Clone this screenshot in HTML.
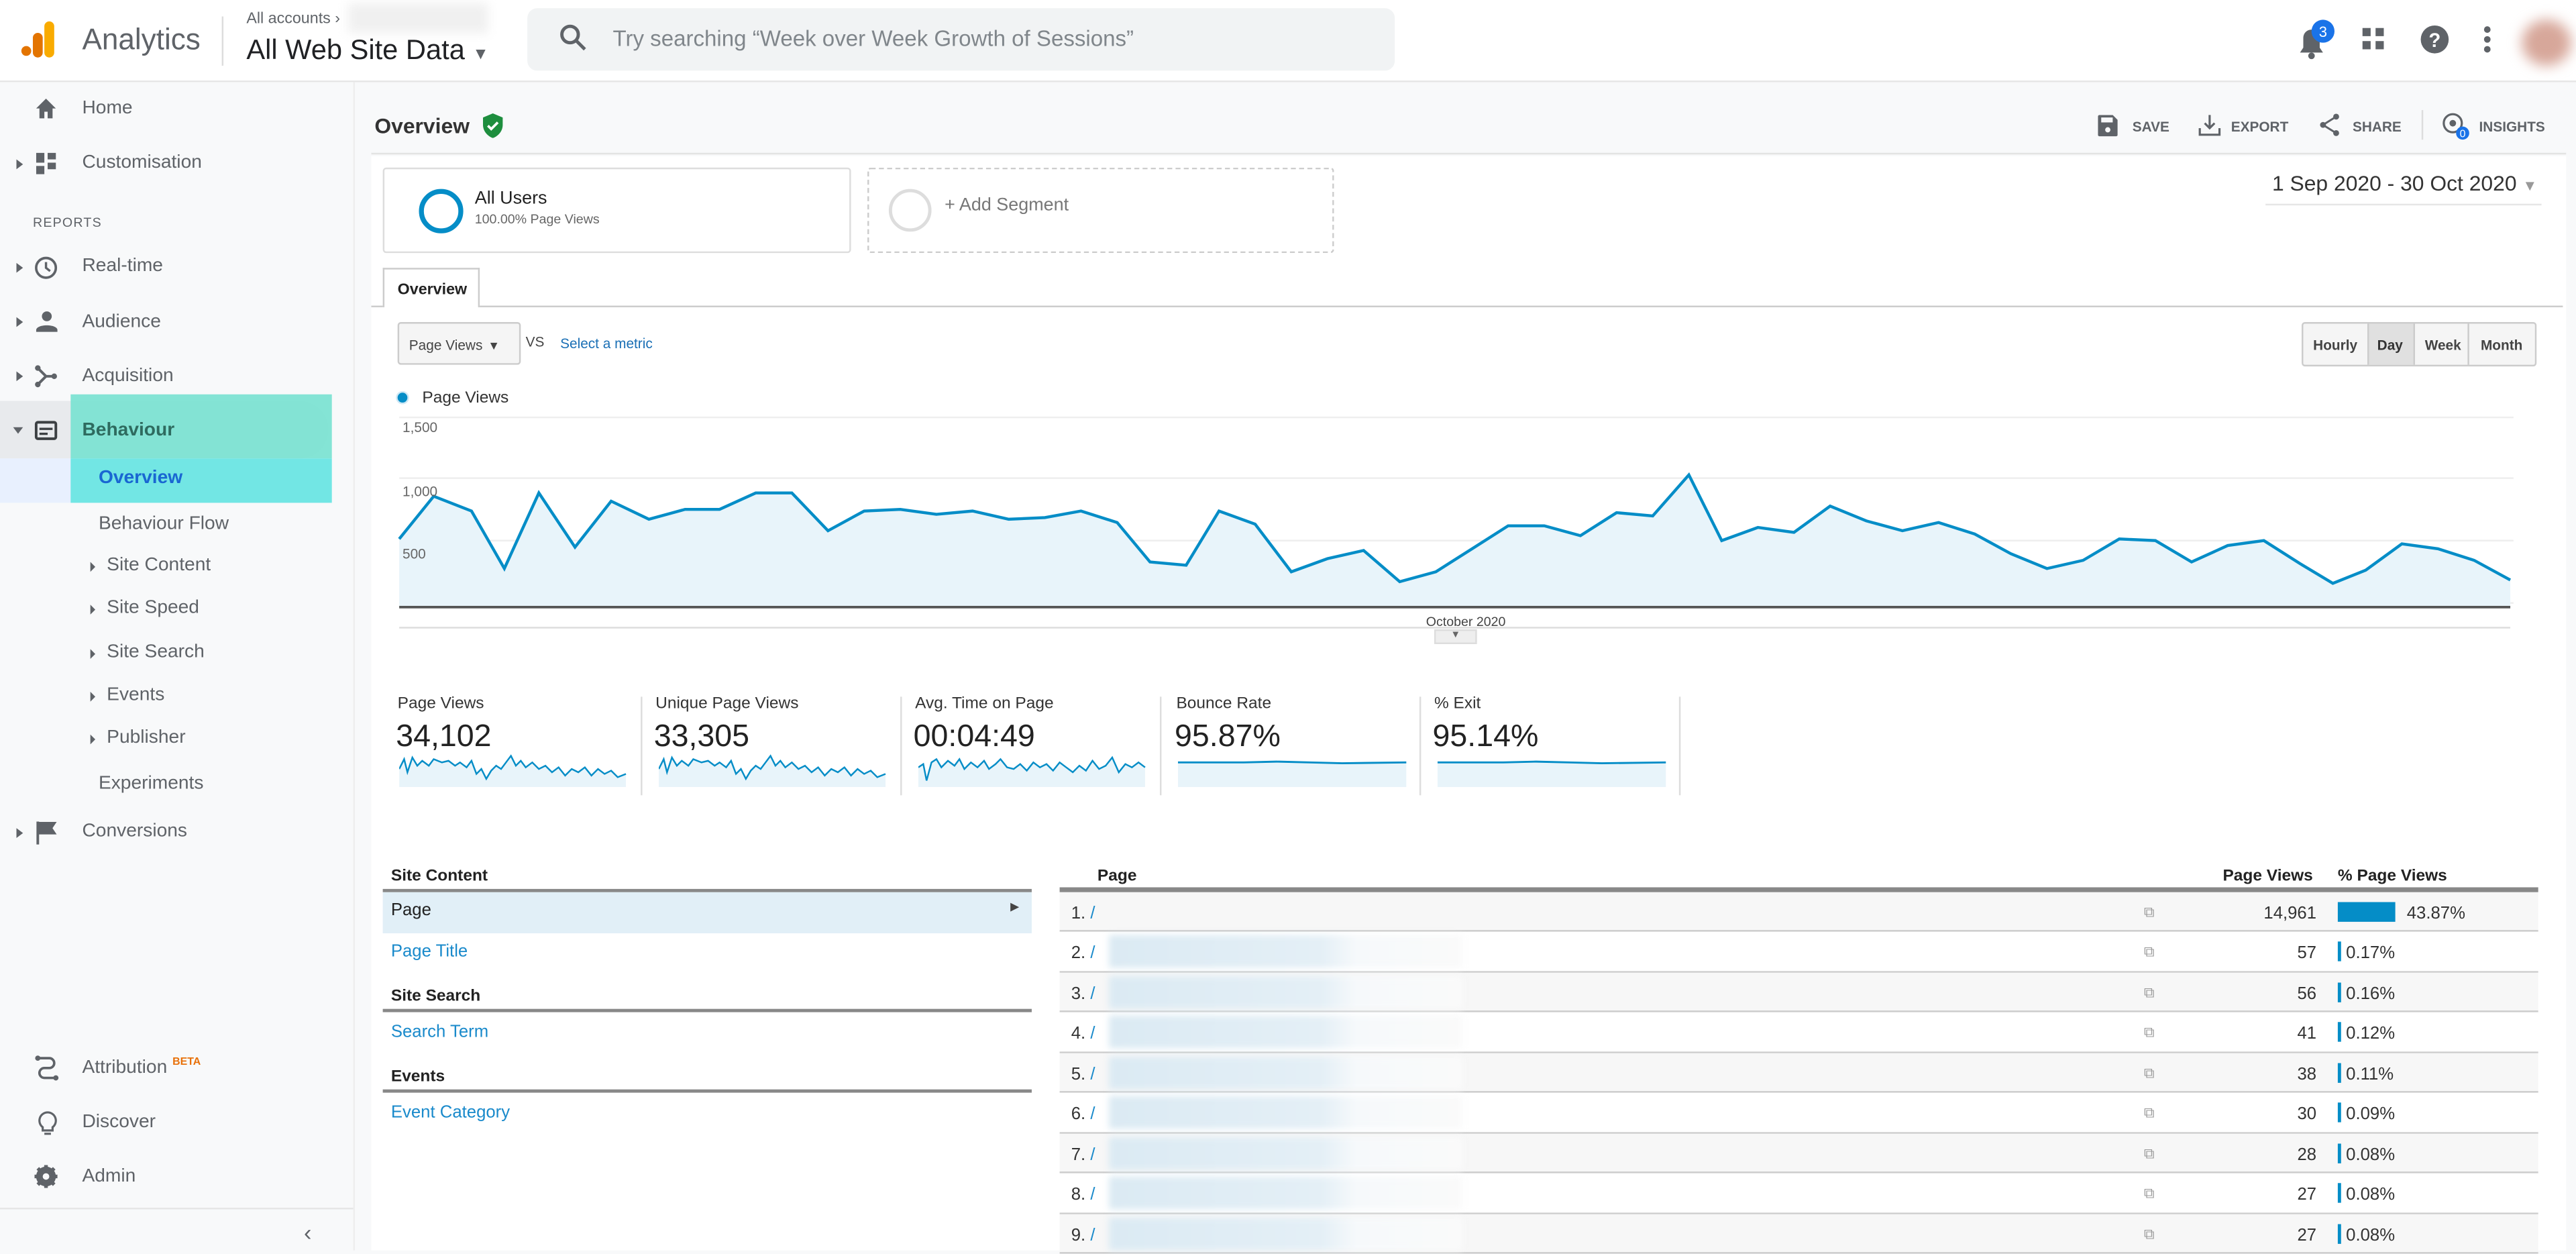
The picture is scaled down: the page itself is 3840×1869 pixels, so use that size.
<!DOCTYPE html>
<html><head><meta charset="utf-8"><style>
*{box-sizing:border-box;margin:0;padding:0}
html,body{width:3840px;height:1864px;overflow:hidden;background:#f8f9fa;font-family:"Liberation Sans",sans-serif}
#s{position:absolute;left:0;top:0;width:1568px;height:761px;transform:scale(2.44898);transform-origin:0 0;background:#f8f9fa}
.a{position:absolute;white-space:nowrap}
.nav{font-size:11.5px;color:#5f6368}
.ic{fill:#5f6368}
.tri{position:absolute;width:0;height:0;border-top:3px solid transparent;border-bottom:3px solid transparent;border-left:4px solid #5f6368}
.row{position:absolute;left:645px;width:900px;height:24.5px;border-bottom:1px solid #ccc;font-size:10.5px;color:#333}
.row span{position:absolute;top:7px}
.blur{position:absolute;left:675px;width:215px;height:20px;background:linear-gradient(90deg,#dbeaf3 0,#e4eff6 60%,#f6f9fb 70%,#fafafa 100%);filter:blur(2px)}
</style></head><body><div id="s">
<!-- top bar -->
<div class="a" style="left:0;top:0;width:1568px;height:50px;background:#fff;border-bottom:1px solid #e6e6e6"></div>
<svg class="a" style="left:12px;top:11px" width="24" height="26"><rect x="1" y="17" width="6" height="6" rx="3" fill="#e37400"/><rect x="8" y="9" width="6" height="15" rx="3" fill="#e37400"/><rect x="15" y="2" width="6" height="22" rx="3" fill="#f9ab00"/></svg>
<div class="a" style="left:50px;top:14px;font-size:18px;color:#5f6368">Analytics</div>
<div class="a" style="left:135px;top:10px;width:1px;height:30px;background:#ddd"></div>
<div class="a" style="left:150px;top:6px;font-size:9.5px;color:#5f6368">All accounts ›</div>
<div class="a" style="left:212px;top:2px;width:85px;height:18px;background:#f0f0f0;filter:blur(3px)"></div>
<div class="a" style="left:150px;top:21px;font-size:17px;color:#202124">All Web Site Data <span style="font-size:10px;color:#5f6368">▼</span></div>
<div class="a" style="left:321px;top:5px;width:528px;height:38px;background:#f1f3f4;border-radius:6px"></div>
<svg class="a" style="left:340px;top:14px" width="18" height="18"><circle cx="7" cy="7" r="5" fill="none" stroke="#5f6368" stroke-width="2"/><path d="M11 11l5 5" stroke="#5f6368" stroke-width="2"/></svg>
<div class="a" style="left:373px;top:16px;font-size:13.5px;color:#80868b">Try searching “Week over Week Growth of Sessions”</div>
<svg class="a" style="left:1396px;top:10px" width="30" height="28"><path d="M4 22h14l-2-3v-6a5 5 0 0 0-10 0v6z" class="ic"/><circle cx="11" cy="24" r="2" class="ic"/><circle cx="18" cy="9" r="7" fill="#1a73e8"/><text x="18" y="12.5" font-size="9" fill="#fff" text-anchor="middle" font-family="Liberation Sans">3</text></svg>
<svg class="a" style="left:1438px;top:17px" width="14" height="14"><rect x="0" y="0" width="5" height="5" class="ic"/><rect x="8" y="0" width="5" height="5" class="ic"/><rect x="0" y="8" width="5" height="5" class="ic"/><rect x="8" y="8" width="5" height="5" class="ic"/></svg>
<svg class="a" style="left:1473px;top:15px" width="18" height="18"><circle cx="9" cy="9" r="8.5" class="ic"/><text x="9" y="13.5" font-size="12" font-weight="bold" fill="#fff" text-anchor="middle" font-family="Liberation Sans">?</text></svg>
<svg class="a" style="left:1511px;top:15px" width="6" height="18"><circle cx="3" cy="3" r="2" class="ic"/><circle cx="3" cy="9" r="2" class="ic"/><circle cx="3" cy="15" r="2" class="ic"/></svg>
<div class="a" style="left:1535px;top:12px;width:30px;height:28px;border-radius:50%;background:#d7a79a;filter:blur(4px)"></div>
<!-- sidebar -->
<div class="a" style="left:0;top:50px;width:216px;height:711px;background:#f8f9fa;border-right:1px solid #eee"></div>
<svg class="a" style="left:21px;top:59px" width="14" height="14"><path d="M7 1l6 6h-2v6H8V9H6v4H3V7H1z" class="ic"/></svg>
<div class="a nav" style="left:50px;top:60px">Home</div>
<div class="tri" style="left:10px;top:97px"></div>
<svg class="a" style="left:22px;top:93px" width="13" height="14"><rect x="0" y="0" width="5" height="6" class="ic"/><rect x="7" y="0" width="5" height="4" class="ic"/><rect x="0" y="8" width="5" height="5" class="ic"/><rect x="7" y="6" width="5" height="4" class="ic"/></svg>
<div class="a nav" style="left:50px;top:93px">Customisation</div>
<div class="a" style="left:20px;top:131px;font-size:8px;color:#5f6368;letter-spacing:.5px">REPORTS</div>
<div class="tri" style="left:10px;top:160px"></div>
<svg class="a" style="left:21px;top:156px" width="14" height="14"><circle cx="7" cy="7" r="6" fill="none" stroke="#5f6368" stroke-width="1.5"/><path d="M7 3.5V7l2.5 2" stroke="#5f6368" stroke-width="1.4" fill="none"/></svg>
<div class="a nav" style="left:50px;top:156px">Real-time</div>
<div class="tri" style="left:10px;top:193px"></div>
<svg class="a" style="left:22px;top:189px" width="13" height="13"><circle cx="6.5" cy="3.5" r="3" class="ic"/><path d="M0 12c0-4 13-4 13 0v1H0z" class="ic"/></svg>
<div class="a nav" style="left:50px;top:190px">Audience</div>
<div class="tri" style="left:10px;top:226px"></div>
<svg class="a" style="left:21px;top:222px" width="14" height="14"><path d="M2 2l5 5h5M7 7l-5 5" stroke="#5f6368" stroke-width="1.6" fill="none"/><circle cx="2" cy="2" r="1.7" class="ic"/><circle cx="12" cy="7" r="1.7" class="ic"/><circle cx="2" cy="12" r="1.7" class="ic"/></svg>
<div class="a nav" style="left:50px;top:223px">Acquisition</div>
<div class="a" style="left:0;top:244px;width:200px;height:35px;background:#e8eaed;border-radius:0 18px 18px 0"></div>
<div class="a" style="left:0;top:279px;width:200px;height:27px;background:#e8f0fe"></div>
<div class="a" style="left:43px;top:240px;width:159px;height:39px;background:#7de3d3;opacity:.95"></div>
<div class="a" style="left:43px;top:279px;width:159px;height:27px;background:#72e6e4"></div>
<div class="a" style="left:8px;top:260px;border-left:3px solid transparent;border-right:3px solid transparent;border-top:4px solid #5f6368"></div>
<svg class="a" style="left:21px;top:256px" width="14" height="12"><rect x="1" y="1" width="12" height="10" rx="1" fill="none" stroke="#3c4043" stroke-width="1.6"/><path d="M3 5h8M3 8h5" stroke="#3c4043" stroke-width="1.4"/></svg>
<div class="a nav" style="left:50px;top:256px;color:#2e6b5f;font-weight:bold">Behaviour</div>
<div class="a nav" style="left:60px;top:285px;color:#1967d2;font-weight:bold">Overview</div>
<div class="a nav" style="left:60px;top:313px">Behaviour Flow</div>
<div class="tri" style="left:55px;top:342px;border-left-width:3px"></div><div class="a nav" style="left:65px;top:338px">Site Content</div>
<div class="tri" style="left:55px;top:368px;border-left-width:3px"></div><div class="a nav" style="left:65px;top:364px">Site Speed</div>
<div class="tri" style="left:55px;top:395px;border-left-width:3px"></div><div class="a nav" style="left:65px;top:391px">Site Search</div>
<div class="tri" style="left:55px;top:421px;border-left-width:3px"></div><div class="a nav" style="left:65px;top:417px">Events</div>
<div class="tri" style="left:55px;top:447px;border-left-width:3px"></div><div class="a nav" style="left:65px;top:443px">Publisher</div>
<div class="a nav" style="left:60px;top:471px">Experiments</div>
<div class="tri" style="left:10px;top:504px"></div>
<svg class="a" style="left:22px;top:500px" width="13" height="14"><path d="M1 0v14M1 1h10l-2 3 2 3H1" stroke="#5f6368" stroke-width="1.6" fill="#5f6368"/></svg>
<div class="a nav" style="left:50px;top:500px">Conversions</div>
<svg class="a" style="left:21px;top:642px" width="16" height="16"><path d="M2 2h7a3 3 0 0 1 0 6H6a3 3 0 0 0 0 6h6" stroke="#5f6368" stroke-width="1.5" fill="none"/><circle cx="2" cy="2" r="1.6" class="ic"/><circle cx="13" cy="14" r="1.6" class="ic"/></svg>
<div class="a nav" style="left:50px;top:643px">Attribution <sup style="color:#e8710a;font-size:6.5px;font-weight:bold">BETA</sup></div>
<svg class="a" style="left:23px;top:676px" width="12" height="16"><path d="M6 1a5 5 0 0 0-3 9v2h6v-2a5 5 0 0 0-3-9z" fill="none" stroke="#5f6368" stroke-width="1.3"/><path d="M4 14h4" stroke="#5f6368" stroke-width="1.3"/></svg>
<div class="a nav" style="left:50px;top:677px">Discover</div>
<svg class="a" style="left:21px;top:709px" width="14" height="14"><circle cx="7" cy="7" r="4.5" fill="none" stroke="#5f6368" stroke-width="3"/><path d="M7 0v14M0 7h14M2 2l10 10M12 2L2 12" stroke="#5f6368" stroke-width="2.2"/><circle cx="7" cy="7" r="2" fill="#f8f9fa"/></svg>
<div class="a nav" style="left:50px;top:710px">Admin</div>
<div class="a" style="left:0;top:735px;width:215px;height:1px;background:#e6e6e6"></div>
<div class="a" style="left:185px;top:742px;font-size:14px;color:#5f6368">‹</div>
<!-- header -->
<div class="a" style="left:228px;top:69px;font-size:13px;font-weight:bold;color:#333">Overview</div>
<svg class="a" style="left:293px;top:69px" width="14" height="15"><path d="M7 0l6 2.5v4.5c0 4-3 7-6 8-3-1-6-4-6-8V2.5z" fill="#1e8e3e"/><path d="M4 7.5l2 2 4-4" stroke="#fff" stroke-width="1.5" fill="none"/></svg>
<div class="a" style="left:226px;top:93px;width:1336px;height:1px;background:#e3e3e3"></div>
<svg class="a" style="left:1277px;top:70px" width="12" height="13"><path d="M0 1a1 1 0 0 1 1-1h8l3 3v9a1 1 0 0 1-1 1H1a1 1 0 0 1-1-1z" class="ic"/><rect x="2" y="1.5" width="7" height="3" fill="#f8f9fa"/><circle cx="6" cy="9" r="1.6" fill="#f8f9fa"/></svg>
<div class="a" style="left:1298px;top:72px;font-size:8.5px;font-weight:bold;color:#5f6368">SAVE</div>
<svg class="a" style="left:1338px;top:69px" width="14" height="14"><path d="M7 1v8M4 6l3 3 3-3M1 9v4h12V9" stroke="#5f6368" stroke-width="1.3" fill="none"/></svg>
<div class="a" style="left:1358px;top:72px;font-size:8.5px;font-weight:bold;color:#5f6368">EXPORT</div>
<svg class="a" style="left:1411px;top:69px" width="14" height="14"><path d="M11 2L3 7l8 5" stroke="#5f6368" stroke-width="1.2" fill="none"/><circle cx="11" cy="2" r="1.8" class="ic"/><circle cx="3" cy="7" r="1.8" class="ic"/><circle cx="11" cy="12" r="1.8" class="ic"/></svg>
<div class="a" style="left:1432px;top:72px;font-size:8.5px;font-weight:bold;color:#5f6368">SHARE</div>
<div class="a" style="left:1474px;top:67px;width:1px;height:18px;background:#ddd"></div>
<svg class="a" style="left:1486px;top:68px" width="20" height="18"><circle cx="7" cy="7" r="5.5" fill="none" stroke="#5f6368" stroke-width="1.3"/><circle cx="7" cy="7" r="2" class="ic"/><circle cx="13" cy="13" r="4" fill="#1a73e8"/><text x="13" y="15.5" font-size="6.5" fill="#fff" text-anchor="middle" font-family="Liberation Sans">0</text></svg>
<div class="a" style="left:1509px;top:72px;font-size:8.5px;font-weight:bold;color:#5f6368">INSIGHTS</div>
<!-- white panel -->
<div class="a" style="left:226px;top:95px;width:1336px;height:666px;background:#fff"></div>
<div class="a" style="left:233px;top:102px;width:285px;height:52px;border:1px solid #ddd;border-radius:2px;background:#fff"></div>
<div class="a" style="left:255px;top:115px;width:27px;height:27px;border-radius:50%;border:3.5px solid #058dc7"></div>
<div class="a" style="left:289px;top:115px;font-size:11px;color:#222">All Users</div>
<div class="a" style="left:289px;top:129px;font-size:8px;color:#666">100.00% Page Views</div>
<div class="a" style="left:528px;top:102px;width:284px;height:52px;border:1px dashed #ccc;border-radius:2px"></div>
<div class="a" style="left:541px;top:115px;width:26px;height:26px;border-radius:50%;border:2px solid #ddd"></div>
<div class="a" style="left:575px;top:119px;font-size:11px;color:#777">+ Add Segment</div>
<div class="a" style="left:1383px;top:104px;font-size:13px;color:#333">1 Sep 2020 - 30 Oct 2020 <span style="font-size:9px;color:#999">▼</span></div>
<div class="a" style="left:1379px;top:124px;width:168px;height:1px;background:#e6e6e6"></div>
<div class="a" style="left:226px;top:186px;width:1334px;height:1px;background:#ccc"></div>
<div class="a" style="left:233px;top:163px;width:59px;height:24px;background:#fff;border:1px solid #ccc;border-bottom:none;font-size:9.5px;font-weight:bold;color:#222;padding:7px 0 0 8px">Overview</div>
<div class="a" style="left:242px;top:196px;width:75px;height:26px;border:1px solid #ccc;border-radius:2px;background:#f5f5f5;font-size:8.5px;color:#444;padding:8px 0 0 6px">Page Views &nbsp;▾</div>
<div class="a" style="left:320px;top:203px;font-size:8.5px;color:#444">VS</div>
<div class="a" style="left:341px;top:204px;font-size:8.5px;color:#1a6fb5">Select a metric</div>
<div class="a" style="left:1401px;top:196px;width:143px;height:27px;border:1px solid #ccc;border-radius:2px;background:#f5f5f5;font-size:8.5px;font-weight:bold;color:#444"></div>
<div class="a" style="left:1441px;top:197px;width:29px;height:25px;background:#e0e0e0;border-left:1px solid #ccc;border-right:1px solid #ccc"></div>
<div class="a" style="left:1502px;top:197px;width:1px;height:25px;background:#ccc"></div>
<div class="a" style="left:1408px;top:205px;font-size:8.5px;font-weight:bold;color:#444">Hourly</div>
<div class="a" style="left:1447px;top:205px;font-size:8.5px;font-weight:bold;color:#333">Day</div>
<div class="a" style="left:1476px;top:205px;font-size:8.5px;font-weight:bold;color:#444">Week</div>
<div class="a" style="left:1510px;top:205px;font-size:8.5px;font-weight:bold;color:#444">Month</div>
<div class="a" style="left:241px;top:238px;width:8px;height:8px;border-radius:50%;background:#058dc7;border:1.5px solid #cfe8f5"></div>
<div class="a" style="left:257px;top:237px;font-size:10px;color:#333">Page Views</div>
<svg class="a" style="left:240px;top:250px" width="1290" height="140">
<g stroke="#eee" stroke-width="1"><path d="M3 4H1290M3 41H1290M3 79H1290M3 117H1290"/></g>
<path d="M3 78L24 52L47 61L67 96L88 50L110 83L132 55L155 66L177 60L198 60L220 50L242 50L264 73L286 61L308 60L330 63L352 61L374 66L396 65L418 61L440 68L460 92L482 94L502 61L524 69L546 98L568 90L590 85L612 104L634 98L656 84L678 70L700 70L722 76L744 62L766 64L788 39L808 79L830 71L852 74L874 58L896 67L918 73L940 68L962 75L984 87L1006 96L1028 91L1050 78L1072 79L1094 92L1116 82L1138 79L1160 93L1180 105L1200 97L1222 81L1244 84L1266 91L1288 103L1288 119L3 119Z" fill="#e8f4fa"/>
<path d="M3 78L24 52L47 61L67 96L88 50L110 83L132 55L155 66L177 60L198 60L220 50L242 50L264 73L286 61L308 60L330 63L352 61L374 66L396 65L418 61L440 68L460 92L482 94L502 61L524 69L546 98L568 90L590 85L612 104L634 98L656 84L678 70L700 70L722 76L744 62L766 64L788 39L808 79L830 71L852 74L874 58L896 67L918 73L940 68L962 75L984 87L1006 96L1028 91L1050 78L1072 79L1094 92L1116 82L1138 79L1160 93L1180 105L1200 97L1222 81L1244 84L1266 91L1288 103" fill="none" stroke="#058dc7" stroke-width="1.8"/>
<path d="M3 119.5H1288" stroke="#555" stroke-width="1.5"/>
<path d="M3 132H1288" stroke="#ddd" stroke-width="1"/>
</svg>
<div class="a" style="left:245px;top:255px;font-size:8.5px;color:#666">1,500</div>
<div class="a" style="left:245px;top:294px;font-size:8.5px;color:#666">1,000</div>
<div class="a" style="left:245px;top:332px;font-size:8.5px;color:#666">500</div>
<div class="a" style="left:868px;top:374px;font-size:8px;color:#444">October 2020</div>
<div class="a" style="left:873px;top:383px;width:26px;height:9px;background:#eee;border:1px solid #ddd;font-size:6px;color:#666;text-align:center">▼</div>
<!-- metrics -->
<div class="a" style="left:242px;top:423px;font-size:10px;color:#333">Page Views</div>
<div class="a" style="left:241px;top:438px;font-size:19px;color:#222">34,102</div>
<div class="a" style="left:390px;top:424px;width:1px;height:60px;background:#ddd"></div>
<div class="a" style="left:399px;top:423px;font-size:10px;color:#333">Unique Page Views</div>
<div class="a" style="left:398px;top:438px;font-size:19px;color:#222">33,305</div>
<div class="a" style="left:548px;top:424px;width:1px;height:60px;background:#ddd"></div>
<div class="a" style="left:557px;top:423px;font-size:10px;color:#333">Avg. Time on Page</div>
<div class="a" style="left:556px;top:438px;font-size:19px;color:#222">00:04:49</div>
<div class="a" style="left:706px;top:424px;width:1px;height:60px;background:#ddd"></div>
<div class="a" style="left:716px;top:423px;font-size:10px;color:#333">Bounce Rate</div>
<div class="a" style="left:715px;top:438px;font-size:19px;color:#222">95.87%</div>
<div class="a" style="left:864px;top:424px;width:1px;height:60px;background:#ddd"></div>
<div class="a" style="left:873px;top:423px;font-size:10px;color:#333">% Exit</div>
<div class="a" style="left:872px;top:438px;font-size:19px;color:#222">95.14%</div>
<div class="a" style="left:1022px;top:424px;width:1px;height:60px;background:#ddd"></div>
<svg class="a" style="left:243px;top:458px" width="140" height="22"><path d="M0 10L3 4L5 12L8 3L11 8L14 5L18 8L21 4L26 6L30 5L34 8L37 6L41 9L44 5L47 13L50 10L53 16L56 11L59 8L62 10L65 6L68 2L71 8L74 5L77 9L81 6L85 10L89 8L93 12L97 9L101 14L105 10L109 12L113 9L117 14L121 10L125 13L129 11L133 15L138 13L138 21L0 21Z" fill="#e8f4fa" stroke="none"/><path d="M0 10L3 4L5 12L8 3L11 8L14 5L18 8L21 4L26 6L30 5L34 8L37 6L41 9L44 5L47 13L50 10L53 16L56 11L59 8L62 10L65 6L68 2L71 8L74 5L77 9L81 6L85 10L89 8L93 12L97 9L101 14L105 10L109 12L113 9L117 14L121 10L125 13L129 11L133 15L138 13" fill="none" stroke="#058dc7" stroke-width="1"/></svg>
<svg class="a" style="left:401px;top:458px" width="140" height="22"><path d="M0 10L3 4L5 12L8 3L11 8L14 5L18 8L21 4L26 6L30 5L34 8L37 6L41 9L44 5L47 13L50 10L53 16L56 11L59 8L62 10L65 6L68 2L71 8L74 5L77 9L81 6L85 10L89 8L93 12L97 9L101 14L105 10L109 12L113 9L117 14L121 10L125 13L129 11L133 15L138 13L138 21L0 21Z" fill="#e8f4fa"/><path d="M0 10L3 4L5 12L8 3L11 8L14 5L18 8L21 4L26 6L30 5L34 8L37 6L41 9L44 5L47 13L50 10L53 16L56 11L59 8L62 10L65 6L68 2L71 8L74 5L77 9L81 6L85 10L89 8L93 12L97 9L101 14L105 10L109 12L113 9L117 14L121 10L125 13L129 11L133 15L138 13" fill="none" stroke="#058dc7" stroke-width="1"/></svg>
<svg class="a" style="left:559px;top:458px" width="140" height="22"><path d="M0 9L3 7L5 17L8 6L11 4L14 9L18 5L22 8L25 4L28 10L32 6L36 9L40 5L43 10L47 7L50 4L54 9L58 10L62 7L66 11L70 6L74 9L78 7L82 11L86 6L90 9L94 12L98 8L102 11L106 5L110 10L114 8L118 3L122 12L126 7L130 9L134 6L138 9L138 21L0 21Z" fill="#e8f4fa"/><path d="M0 9L3 7L5 17L8 6L11 4L14 9L18 5L22 8L25 4L28 10L32 6L36 9L40 5L43 10L47 7L50 4L54 9L58 10L62 7L66 11L70 6L74 9L78 7L82 11L86 6L90 9L94 12L98 8L102 11L106 5L110 10L114 8L118 3L122 12L126 7L130 9L134 6L138 9" fill="none" stroke="#058dc7" stroke-width="1"/></svg>
<svg class="a" style="left:717px;top:458px" width="140" height="22"><rect x="0" y="6" width="139" height="15" fill="#e8f4fa"/><path d="M0 6L40 6L60 5.5L80 6L100 6.5L139 6" fill="none" stroke="#058dc7" stroke-width="1.2"/></svg>
<svg class="a" style="left:875px;top:458px" width="140" height="22"><rect x="0" y="6" width="139" height="15" fill="#e8f4fa"/><path d="M0 6L40 6L60 5.5L80 6L100 6.5L139 6" fill="none" stroke="#058dc7" stroke-width="1.2"/></svg>
<!-- left list -->
<div class="a" style="left:238px;top:528px;font-size:10px;font-weight:bold;color:#222">Site Content</div>
<div class="a" style="left:233px;top:541px;width:395px;height:2px;background:#888"></div>
<div class="a" style="left:233px;top:543px;width:395px;height:25px;background:#e1eff7"></div>
<div class="a" style="left:238px;top:548px;font-size:10.5px;color:#222">Page</div>
<div class="a" style="left:615px;top:548px;font-size:7px;color:#444">▶</div>
<div class="a" style="left:238px;top:573px;font-size:10.5px;color:#1a8acb">Page Title</div>
<div class="a" style="left:238px;top:601px;font-size:10px;font-weight:bold;color:#222">Site Search</div>
<div class="a" style="left:233px;top:614px;width:395px;height:2px;background:#888"></div>
<div class="a" style="left:238px;top:622px;font-size:10.5px;color:#1a8acb">Search Term</div>
<div class="a" style="left:238px;top:650px;font-size:10px;font-weight:bold;color:#222">Events</div>
<div class="a" style="left:233px;top:663px;width:395px;height:2px;background:#888"></div>
<div class="a" style="left:238px;top:671px;font-size:10.5px;color:#1a8acb">Event Category</div>
<!-- table -->
<div class="a" style="left:668px;top:528px;font-size:10px;font-weight:bold;color:#222">Page</div>
<div class="a" style="left:1353px;top:528px;font-size:10px;font-weight:bold;color:#222">Page Views</div>
<div class="a" style="left:1423px;top:528px;font-size:10px;font-weight:bold;color:#222">% Page Views</div>
<div class="a" style="left:645px;top:540px;width:900px;height:2.5px;background:#888"></div>
<div class="row" style="top:542.5px;background:#f7f7f7"><span style="left:7px">1. <b style="color:#1a8acb;font-weight:normal">/</b></span><span style="left:660px;color:#999;font-size:9px">⧉</span><span style="right:135px">14,961</span><span style="left:778px;top:6px;width:35px;height:12px;background:#058dc7"></span><span style="left:820px">43.87%</span></div>
<div class="row" style="top:567px"><span style="left:7px">2. <b style="color:#1a8acb;font-weight:normal">/</b></span><span style="left:660px;color:#999;font-size:9px">⧉</span><span style="right:135px">57</span><span style="left:778px;top:6px;width:1.5px;height:12px;background:#058dc7"></span><span style="left:783px">0.17%</span></div>
<div class="row" style="top:591.5px;background:#f7f7f7"><span style="left:7px">3. <b style="color:#1a8acb;font-weight:normal">/</b></span><span style="left:660px;color:#999;font-size:9px">⧉</span><span style="right:135px">56</span><span style="left:778px;top:6px;width:1.5px;height:12px;background:#058dc7"></span><span style="left:783px">0.16%</span></div>
<div class="row" style="top:616px"><span style="left:7px">4. <b style="color:#1a8acb;font-weight:normal">/</b></span><span style="left:660px;color:#999;font-size:9px">⧉</span><span style="right:135px">41</span><span style="left:778px;top:6px;width:1.5px;height:12px;background:#058dc7"></span><span style="left:783px">0.12%</span></div>
<div class="row" style="top:640.5px;background:#f7f7f7"><span style="left:7px">5. <b style="color:#1a8acb;font-weight:normal">/</b></span><span style="left:660px;color:#999;font-size:9px">⧉</span><span style="right:135px">38</span><span style="left:778px;top:6px;width:1.5px;height:12px;background:#058dc7"></span><span style="left:783px">0.11%</span></div>
<div class="row" style="top:665px"><span style="left:7px">6. <b style="color:#1a8acb;font-weight:normal">/</b></span><span style="left:660px;color:#999;font-size:9px">⧉</span><span style="right:135px">30</span><span style="left:778px;top:6px;width:1.5px;height:12px;background:#058dc7"></span><span style="left:783px">0.09%</span></div>
<div class="row" style="top:689.5px;background:#f7f7f7"><span style="left:7px">7. <b style="color:#1a8acb;font-weight:normal">/</b></span><span style="left:660px;color:#999;font-size:9px">⧉</span><span style="right:135px">28</span><span style="left:778px;top:6px;width:1.5px;height:12px;background:#058dc7"></span><span style="left:783px">0.08%</span></div>
<div class="row" style="top:714px"><span style="left:7px">8. <b style="color:#1a8acb;font-weight:normal">/</b></span><span style="left:660px;color:#999;font-size:9px">⧉</span><span style="right:135px">27</span><span style="left:778px;top:6px;width:1.5px;height:12px;background:#058dc7"></span><span style="left:783px">0.08%</span></div>
<div class="row" style="top:738.5px;background:#f7f7f7"><span style="left:7px">9. <b style="color:#1a8acb;font-weight:normal">/</b></span><span style="left:660px;color:#999;font-size:9px">⧉</span><span style="right:135px">27</span><span style="left:778px;top:6px;width:1.5px;height:12px;background:#058dc7"></span><span style="left:783px">0.08%</span></div>
<div class="blur" style="top:569px"></div><div class="blur" style="top:594px"></div><div class="blur" style="top:618px"></div><div class="blur" style="top:643px"></div><div class="blur" style="top:667px"></div><div class="blur" style="top:692px"></div><div class="blur" style="top:716px"></div><div class="blur" style="top:741px"></div>
</div></body></html>
